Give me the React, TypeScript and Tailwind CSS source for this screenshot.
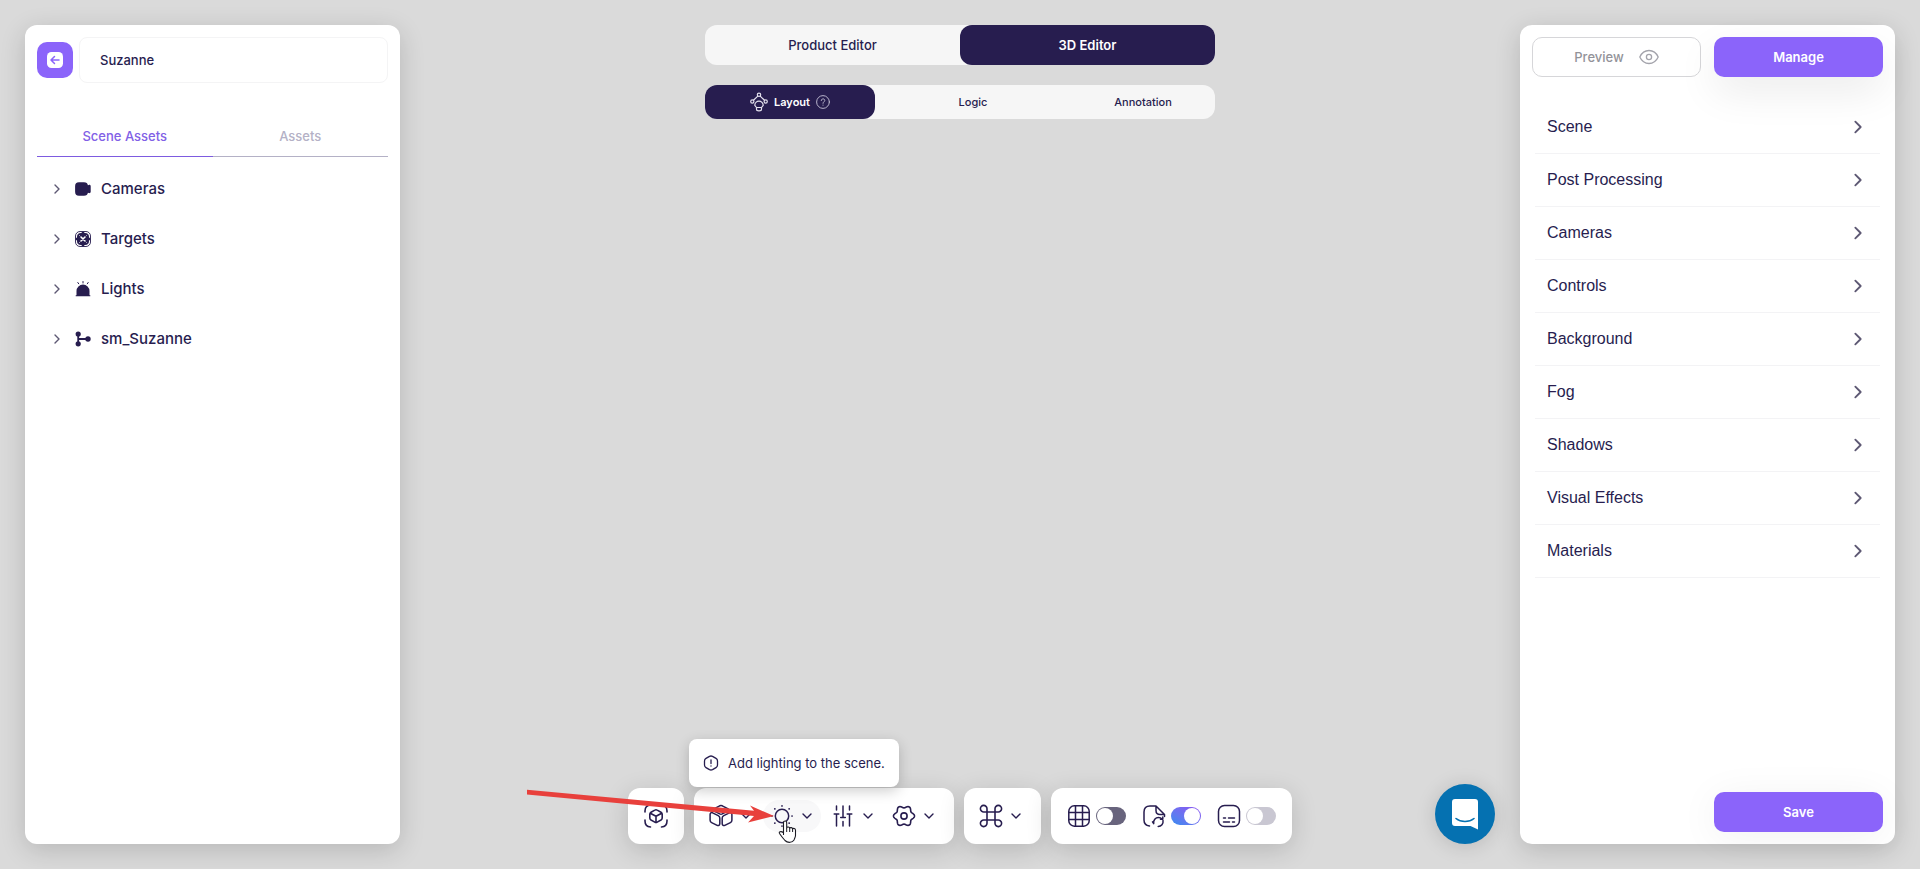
import { useState } from "react";
import type { ReactNode } from "react";

const strokeProps = { fill: "none", stroke: "currentColor", strokeLinecap: "round", strokeLinejoin: "round" } as const;

function Chevron({ dir = "right", className = "" }: { dir?: "right" | "down"; className?: string }) {
  return (
    <svg viewBox="0 0 12 12" className={className} {...strokeProps} strokeWidth={1.4} aria-hidden="true">
      <path d={dir === "right" ? "M4 2l4 4-4 4" : "M2 4l4 4 4-4"} />
    </svg>
  );
}

function CameraIcon() {
  return (
    <svg viewBox="0 0 16 16" className="size-4" fill="currentColor" aria-hidden="true">
      <path d="M4 1.300h5c2.400 0 3.600 1 3.900 2.900l1-.3c1-.3 1.800.3 1.800 1.300v5.600c0 1-.8 1.600-1.800 1.300l-1-.3c-.3 1.900-1.500 2.900-3.900 2.900H4c-2.700 0-3.900-1.300-3.900-3.900V5.200C.1 2.600 1.300 1.300 4 1.300z" />
    </svg>
  );
}

function TargetIcon() {
  return (
    <svg viewBox="0 0 16 16" className="size-4" aria-hidden="true">
      <rect x="0.5" y="0.5" width="15" height="15" rx="4.500" fill="none" stroke="currentColor" strokeWidth="0.9" />
      <rect x="2" y="2" width="12" height="12" rx="4" fill="currentColor" />
      <path d="M8 .8v3M8 12.200v3M.8 8h3M12.200 8h3" stroke="currentColor" strokeWidth="2.600" />
      <path d="M6 6l4 4M10 6l-4 4" stroke="white" strokeWidth="1.600" strokeLinecap="round" />
      <path d="M4.200 4.200l.1.1M11.800 4.200l-.1.1M4.200 11.800l.1-.1M11.800 11.800l-.1-.1" stroke="white" strokeWidth="1" strokeLinecap="round" />
    </svg>
  );
}

function LightIcon() {
  return (
    <svg viewBox="0 0 16 16" className="size-4" aria-hidden="true">
      <path d="M1.500 14.300V10a6.500 6.500 0 0 1 13 0v4.300H15.300v1H.7v-1z" fill="currentColor" />
      <path d="M8 .5v1.500M2.800 1.500l.9 1.300M13.200 1.500l-.9 1.300" {...strokeProps} strokeWidth="1" />
    </svg>
  );
}

function NodesIcon() {
  return (
    <svg viewBox="0 0 16 16" className="size-4" aria-hidden="true">
      <path d="M3.200 3v10.500M3.200 8H13" fill="none" stroke="currentColor" strokeWidth="1.800" />
      <g fill="currentColor">
        <circle cx="3.200" cy="3" r="2.600" />
        <circle cx="3.200" cy="12.800" r="2.600" />
        <circle cx="13" cy="8" r="2.700" />
      </g>
    </svg>
  );
}

function LayoutIcon() {
  return (
    <svg viewBox="0 0 18 20" className="h-5 w-[18px]" {...strokeProps} stroke="#e4e1ee" strokeWidth={1.2} aria-hidden="true">
      <circle cx="9" cy="2.800" r="1.700" />
      <circle cx="2.300" cy="9.500" r="1.600" />
      <circle cx="15.700" cy="9.500" r="1.600" />
      <path d="M7.800 4.100L3.500 8.300M10.200 4.100l4.300 4.200M4.800 13.300a4.200 4.200 0 0 1 8.400 0L11.500 15.500h-5zM6.500 15.500v1.800c0 2.200 5 2.200 5 0v-1.800" />
    </svg>
  );
}

function ScanCubeIcon() {
  return (
    <svg viewBox="0 0 24 24" className="size-6" {...strokeProps} strokeWidth={1.6} aria-hidden="true">
      <path d="M1 8V7c0-3.500 2-5.800 5.500-6M17.500 1C21 1.200 23 3.500 23 7v1M23 16v1c0 3.500-2 5.800-5.500 6M6.500 23C3 22.800 1 20.500 1 17v-1" />
      <path d="M10.800 6.100L7 8.200c-.8.500-1.200 1-1.200 2v3.800c0 1 .4 1.500 1.200 2l3.800 2.100c.8.500 1.600.5 2.400 0L17 16c.8-.5 1.200-1 1.200-2v-3.800c0-1-.4-1.500-1.200-2l-3.800-2.100c-.8-.5-1.600-.5-2.400 0zM6.300 9.200L12 12.300l5.700-3.100M12 12.300v6" />
    </svg>
  );
}

function BoxIcon() {
  return (
    <svg viewBox="0 0 24 24" className="size-6" {...strokeProps} strokeWidth={1.5} aria-hidden="true">
      <path d="M10.700 1.800L5.300 4.600c-1.200.7-1.200 1.900 0 2.500l5.400 2.800c.9.400 1.700.4 2.600 0l5.400-2.800c1.200-.6 1.200-1.800 0-2.500l-5.400-2.800c-.9-.4-1.700-.4-2.600 0z" />
      <path d="M3.600 8.800l5.600 2.800c1 .5 1.600 1.300 1.600 2.400v5.700c0 1.500-1.300 2.300-2.600 1.700l-5.600-2.800c-1-.5-1.500-1.300-1.500-2.400V10.500c0-1.500 1.200-2.300 2.500-1.700z" />
      <path d="M20.400 8.800l-5.600 2.800c-1 .5-1.600 1.300-1.600 2.400v5.700c0 1.500 1.300 2.300 2.600 1.700l5.600-2.800c1-.5 1.500-1.300 1.500-2.400V10.500c0-1.500-1.200-2.300-2.500-1.700z" />
    </svg>
  );
}

function SunIcon() {
  return (
    <svg viewBox="0 0 24 24" className="size-6" {...strokeProps} strokeWidth={1.5} aria-hidden="true">
      <circle cx="12" cy="12" r="6.700" />
      <path strokeWidth="1.700" d="M12 1.900v.1M12 22v.1M1.900 12h.1M22 12h.1M4.800 4.800l.1.1M19.100 19.100l.1.1M4.900 19.100l-.1.1M19.200 4.800l-.1.1" />
    </svg>
  );
}

function SlidersIcon() {
  return (
    <svg viewBox="0 0 24 24" className="size-6" {...strokeProps} strokeWidth={1.5} aria-hidden="true">
      <path d="M5.500 2v4M5.500 10v12M3.200 10h4.600M12 2v11.500M9.700 13.500h4.600M12 17.500V22M18.500 2v4M18.500 10v12M16.200 10h4.600" />
    </svg>
  );
}

// Six rounded lobes around the centre.
const gearOutline =
  Array.from({ length: 120 }, (_, i) => {
    const a = (i * Math.PI) / 60;
    const r = 9.3 + 1.2 * Math.cos(6 * a);
    return `${i ? "L" : "M"}${(12 + r * Math.cos(a)).toFixed(2)} ${(12 + r * Math.sin(a)).toFixed(2)}`;
  }).join("") + "z";

function GearIcon() {
  return (
    <svg viewBox="0 0 24 24" className="size-6" {...strokeProps} strokeWidth={1.6} aria-hidden="true">
      <circle cx="12" cy="12" r="3.100" />
      <path d={gearOutline} />
    </svg>
  );
}

function CommandIcon() {
  return (
    <svg viewBox="0 0 24 24" className="size-6" {...strokeProps} strokeWidth={1.6} aria-hidden="true">
      <path d="M8 8h8v8H8zM8 8H5a3.300 3.300 0 1 1 3-3.300zM16 8V4.700A3.300 3.300 0 1 1 19 8zM8 16v3.300A3.300 3.300 0 1 1 5 16zM16 16h3a3.300 3.300 0 1 1-3 3.300z" />
    </svg>
  );
}

function GridIcon() {
  return (
    <svg viewBox="0 0 24 24" className="size-6" {...strokeProps} strokeWidth={1.5} aria-hidden="true">
      <rect x="1.800" y="1.800" width="20.400" height="20.400" rx="5.500" />
      <path d="M8.500 2v20M15.500 2v20M2 8.500h20M2 15.500h20" />
    </svg>
  );
}

function FileIcon() {
  return (
    <svg viewBox="0 0 24 24" className="size-6" {...strokeProps} strokeWidth={1.5} aria-hidden="true">
      <path d="M7.500 22C3.700 21.500 2 19.800 2 16V8c0-4.200 2-6 6-6h6l8.500 8.500v2M14 2v4.500c0 3 1 4 4 4h4.500" />
      <path d="M11.700 19.500c-.6-3.400 1.800-6 4.800-6 1.500 0 2.700.6 3.600 1.600M21 16.500c.6 3.400-1.800 6-4.800 6M20.800 13v2.300h-2.300M10.500 17.800l1.200 1.800" />
    </svg>
  );
}

function CaptionIcon() {
  return (
    <svg viewBox="0 0 24 24" className="size-6" {...strokeProps} strokeWidth={1.5} aria-hidden="true">
      <rect x="1.500" y="1.500" width="21" height="21" rx="6" />
      <path d="M6.500 14h2M11.500 14h6M6.500 18h6M15.500 18h2" />
    </svg>
  );
}

function Pointer() {
  return (
    <svg viewBox="0 0 20 24" className="h-6 w-5" aria-hidden="true">
      <path
        d="M6.500 14.500V2.800c0-2.400 3.200-2.400 3.200 0V8c.3-1.400 2.900-1.200 3 .4.500-1.200 2.700-1 2.900.6.700-1 2.900-.7 2.900 1.200v5.300c0 1.500-1 3-1.500 4.500-1.500 2.500-6 3.500-9 .5-1.500-1.700-3.500-4-5.500-7-1-1.800 1.500-2.800 4-.8z"
        fill="white" stroke="#1b1b24" strokeWidth="1.100" strokeLinejoin="round"
      />
      <path d="M9.700 8v4M12.700 8.500V12M15.600 9v3" stroke="#1b1b24" strokeWidth="1" />
    </svg>
  );
}

const panel = "rounded-xl bg-white shadow-[0_6px_26px_rgba(0,0,0,0.16)]";

function ToolMenu({ label, icon, active = false, children }: { label: string; icon: ReactNode; active?: boolean; children?: ReactNode }) {
  return (
    <div className="relative w-[61px]">
      <button
        type="button"
        aria-label={label}
        className={`flex h-8 items-center gap-[7px] rounded-full pr-2 pl-[7px] ${active ? "bg-[#f8f8f9]" : ""}`}
      >
        {icon}
        <Chevron dir="down" className="size-3" />
      </button>
      {children}
    </div>
  );
}

const trackStyles = {
  dark: "bg-[#68647d]",
  blue: "bg-linear-to-tr from-[#2f8cf0] to-[#8b50f0]",
  pale: "bg-[#c9c7d2]",
};

function Toggle({ label, icon, tone, initial = false }: { label: string; icon: ReactNode; tone: keyof typeof trackStyles; initial?: boolean }) {
  const [on, setOn] = useState(initial);
  return (
    <label className="flex items-center gap-[5px]">
      {icon}
      <span className={`relative flex h-[18px] w-[30px] items-center rounded-full px-px ${trackStyles[tone]}`}>
        <input
          type="checkbox"
          role="switch"
          aria-label={label}
          checked={on}
          onChange={() => setOn(!on)}
          className="peer absolute inset-0 cursor-pointer appearance-none rounded-full"
        />
        <span className="pointer-events-none size-4 rounded-full bg-white peer-checked:ml-auto" />
      </span>
    </label>
  );
}

const assets = [
  { name: "Cameras", icon: <CameraIcon /> },
  { name: "Targets", icon: <TargetIcon /> },
  { name: "Lights", icon: <LightIcon /> },
  { name: "sm_Suzanne", icon: <NodesIcon /> },
];

const sections = ["Scene", "Post Processing", "Cameras", "Controls", "Background", "Fog", "Shadows", "Visual Effects", "Materials"];

export default function App() {
  return (
    <div className="relative flex h-screen justify-between gap-6 bg-[#dadada] p-[25px] font-['Inter',sans-serif] text-[#271d4f]">
      <aside className={`flex w-[375px] shrink-0 flex-col p-3 ${panel}`}>
        <div className="flex items-center gap-[6px]">
          <button type="button" aria-label="Back" className="flex size-9 shrink-0 items-center justify-center rounded-[10px] bg-[#8b64fa]">
            <svg viewBox="0 0 16 16" className="size-4" aria-hidden="true">
              <rect width="16" height="16" rx="4.500" fill="white" />
              <path d="M12 8H4.500M7.500 4.500L4 8l3.500 3.500" fill="none" stroke="#8b64fa" strokeWidth="1.500" strokeLinecap="round" strokeLinejoin="round" />
            </svg>
          </button>
          <input
            aria-label="Scene name"
            defaultValue="Suzanne"
            className="h-[46px] min-w-0 flex-1 rounded-lg border border-[#f4f4f5] px-[20px] text-[13px] leading-5 font-medium outline-none"
          />
        </div>
        <div role="tablist" className="mt-9 grid grid-cols-2 text-[13px] leading-5 font-medium">
          <button type="button" role="tab" aria-selected="true" className="h-[38px] border-b border-[#7d5be0] pb-[3px] text-[#8160e6]">Scene Assets</button>
          <button type="button" role="tab" aria-selected="false" className="h-[38px] border-b border-[#b4b1c6] pb-[3px] text-[#b4b1c6]">Assets</button>
        </div>
        <ul className="mt-[7px] flex flex-col">
          {assets.map((a) => (
            <li key={a.name}>
              <button type="button" className="flex h-[50px] w-full items-center px-[14px] text-[15px] font-medium">
                <Chevron className="mr-3 size-3 text-[#5d5873]" />
                {a.icon}
                <span className="ml-[10px]">{a.name}</span>
              </button>
            </li>
          ))}
        </ul>
      </aside>

      <main className="flex min-w-0 flex-1 flex-col items-center justify-between">
        <nav className="flex w-full max-w-[510px] flex-col gap-5">
          <div className="grid h-10 grid-cols-2 rounded-xl bg-[#f6f6f6] text-[13px] leading-5">
            <button type="button" className="font-medium">Product Editor</button>
            <button type="button" className="rounded-xl bg-[#271d4f] font-semibold text-white">3D Editor</button>
          </div>
          <div className="grid h-[34px] grid-cols-3 rounded-xl bg-[#f6f6f6] text-[11px] font-medium">
            <button type="button" className="flex items-center justify-center gap-[6px] rounded-xl bg-[#271d4f] font-semibold text-white">
              <LayoutIcon />
              Layout
              <svg viewBox="0 0 16 16" className="size-[14px] text-[#bdb9d0]" {...strokeProps} strokeWidth={1.1} aria-hidden="true">
                <circle cx="8" cy="8" r="7.300" />
                <path d="M6 6.300c0-2.600 4-2.600 4 0C10 7.700 8 7.800 8 9.500M8 11.500v.2" />
              </svg>
            </button>
            <button type="button" className="pl-[26px]">Logic</button>
            <button type="button" className="pl-[26px]">Annotation</button>
          </div>
        </nav>

        <div className="flex gap-[10px]" role="toolbar" aria-label="Scene tools">
          <div className={`flex items-center p-4 ${panel}`}>
            <button type="button" aria-label="Focus object"><ScanCubeIcon /></button>
          </div>
          <div className={`flex items-center px-2 ${panel}`}>
            <ToolMenu label="Add object" icon={<BoxIcon />} />
            <ToolMenu label="Add light" icon={<SunIcon />} active>
              <div role="tooltip" className="absolute -top-[61px] -left-[74px] flex h-12 items-center gap-[9px] rounded-lg bg-white px-[14px] text-[13px] leading-5 whitespace-nowrap shadow-[0_4px_14px_rgba(0,0,0,0.2)]">
                <svg viewBox="0 0 16 16" className="size-4" {...strokeProps} strokeWidth={1.3} aria-hidden="true">
                  <path d="M6.500 1.400L3 3.400C2 4 1.500 4.700 1.500 6v4c0 1.300.5 2 1.500 2.600l3.500 2c1 .5 2 .5 3 0l3.500-2c1-.6 1.500-1.300 1.500-2.600V6c0-1.300-.5-2-1.500-2.600l-3.500-2c-1-.5-2-.5-3 0zM8 4.800v3.700M8 11v.1" />
                </svg>
                Add lighting to the scene.
              </div>
              <span className="pointer-events-none absolute top-5 left-[14px]"><Pointer /></span>
            </ToolMenu>
            <ToolMenu label="Adjustments" icon={<SlidersIcon />} />
            <ToolMenu label="Settings" icon={<GearIcon />} />
          </div>
          <div className={`flex items-center px-2 ${panel}`}>
            <ToolMenu label="Shortcuts" icon={<CommandIcon />} />
          </div>
          <div className={`flex h-14 items-center gap-4 px-4 ${panel}`}>
            <Toggle label="Grid" tone="dark" icon={<GridIcon />} />
            <Toggle label="Auto refresh" tone="blue" icon={<FileIcon />} initial />
            <Toggle label="Captions" tone="pale" icon={<CaptionIcon />} />
          </div>
        </div>
      </main>

      <aside className={`flex w-[375px] shrink-0 flex-col justify-between p-3 ${panel}`}>
        <div>
          <div className="grid grid-cols-2 gap-[13px] text-[13px] leading-5">
            <button type="button" className="flex h-10 items-center justify-center gap-[15px] rounded-[10px] border border-[#d6d6d9] font-medium text-[#939399]">
              Preview
              <svg viewBox="0 0 20 16" className="h-4 w-5 text-[#a3a3ab]" {...strokeProps} strokeWidth={1.3} aria-hidden="true">
                <path d="M.8 8C2.500 4.300 5.800 1.500 10 1.500S17.500 4.300 19.200 8c-1.700 3.700-5 6.500-9.200 6.500S2.500 11.700.8 8z" />
                <circle cx="10" cy="8" r="2.600" />
              </svg>
            </button>
            <button type="button" className="h-10 rounded-[10px] bg-[#8b64fa] font-semibold text-white shadow-[0_15px_40px_rgba(0,0,0,0.08)]">Manage</button>
          </div>
          <ul className="mt-[24px] px-[3px]">
            {sections.map((s) => (
              <li key={s} className="border-b border-[#f3f3f5]">
                <button type="button" className="flex h-[52px] w-full items-center justify-between pr-[14px] pl-3 font-['Liberation_Sans',Arial,sans-serif] text-base">
                  {s}
                  <Chevron className="size-4 text-[#5d5873]" />
                </button>
              </li>
            ))}
          </ul>
        </div>
        <div className="grid grid-cols-2 gap-[13px]">
          <button type="button" className="col-start-2 h-10 rounded-[10px] bg-[#8b64fa] text-[13px] leading-5 font-semibold text-white shadow-[0_5px_40px_rgba(0,0,0,0.06)]">Save</button>
        </div>
      </aside>

      <button type="button" aria-label="Open chat" className="absolute right-[425px] bottom-[25px] flex size-[60px] items-center justify-center rounded-full bg-[#0571b1] shadow-[0_2px_20px_rgba(0,0,0,0.15)]">
        <svg viewBox="0 0 28 32" className="h-8 w-7" aria-hidden="true">
          <path d="M4 1h20a3 3 0 0 1 3 3v27.500L19.500 28H4a3 3 0 0 1-3-3V4a3 3 0 0 1 3-3z" fill="white" />
          <path d="M5 20.500c5 4 13 4 18 0" fill="none" stroke="#0571b1" strokeWidth="1.600" strokeLinecap="round" />
        </svg>
      </button>

      <svg viewBox="0 0 248 36" className="pointer-events-none absolute bottom-[44px] left-1/2 -ml-[433px] h-9 w-[248px]" aria-hidden="true">
        <path d="M0 .8l227 21-4-5.300 24 10.500-26 6.500 6-6.500L0 5.500z" fill="#e8403c" />
      </svg>
    </div>
  );
}
